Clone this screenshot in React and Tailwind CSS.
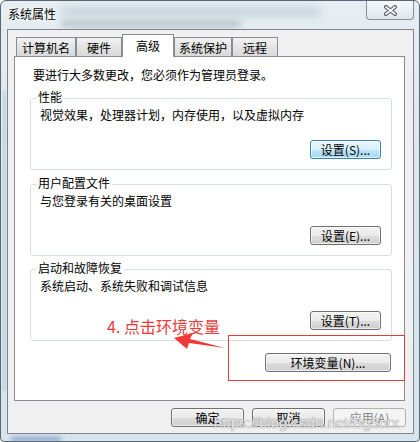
import clsx from "clsx";

const tabs = [
  { name: "计算机名", w: "w-[60px]" },
  { name: "硬件", w: "w-[46px]" },
  { name: "高级", w: "w-[52px]", active: true },
  { name: "系统保护", w: "w-[58px]" },
  { name: "远程", w: "w-[46px]" },
];

const groups = [
  { title: "性能", desc: "视觉效果，处理器计划，内存使用，以及虚拟内存", btn: "设置(S)...", focused: true, mt: "mt-[15px]" },
  { title: "用户配置文件", desc: "与您登录有关的桌面设置", btn: "设置(E)...", mt: "mt-[14px]" },
  { title: "启动和故障恢复", desc: "系统启动、系统失败和调试信息", btn: "设置(T)...", mt: "mt-[13px]" },
];

function WinButton({ children, focused, disabled, className }) {
  return (
    <button
      className={clsx(
        "h-[19px] rounded-[3px] border text-[12px] leading-none flex items-center justify-center",
        focused && "border-[#3c7fb1] bg-[linear-gradient(#eaf6fd_0%,#d9f0fc_50%,#bee6fd_50%,#a7d9f5_100%)] shadow-[inset_0_0_0_1px_rgba(255,255,255,0.7)] text-black",
        disabled && "border-[#adb2b5] bg-[#f4f4f4] text-[#838383]",
        !focused && !disabled && "border-[#707070] bg-[linear-gradient(#f2f2f2_0%,#ebebeb_50%,#dddddd_50%,#cfcfcf_100%)] shadow-[inset_0_0_0_1px_rgba(255,255,255,0.6)] text-black",
        className
      )}
    >
      {children}
    </button>
  );
}

function GroupBox({ g }) {
  return (
    <div className={clsx("relative ml-[15px] w-[362px] h-[72px] rounded-[3px] border border-[#d5dfe5] flex flex-col", g.mt)}>
      <span className="absolute -top-[10px] left-[5px] px-[2px] bg-white leading-[16px]">{g.title}</span>
      <p className="pt-[8px] pl-[9px] leading-[16px]">{g.desc}</p>
      <WinButton focused={g.focused} className="mt-auto self-end mr-[10px] mb-[10px] w-[71px]">
        {g.btn}
      </WinButton>
    </div>
  );
}

export default function App() {
  return (
    <div className="relative w-[420px] h-[442px] overflow-hidden rounded-t-[6px] rounded-b-[4px] border border-[#5a6670] bg-[linear-gradient(180deg,#e6eef3_0%,#dbe6ed_40%,#d7e4ec_100%)] text-[12px] text-black font-['Noto_Sans_CJK_SC',sans-serif]">
      {/* blurred background behind the glass */}
      <div className="absolute left-[60px] top-[6px] w-[260px] h-[10px] rounded-full bg-[#9fb0c0] opacity-40 blur-[4px]" />
      <div className="absolute left-[60px] top-[20px] w-[180px] h-[6px] rounded-full bg-[#6f7f8c] opacity-40 blur-[3px]" />
      <div className="absolute left-[2px] top-[90px] w-[3px] h-[300px] bg-[#9ec1dc] opacity-50 blur-[1px]" />
      <div className="absolute left-[10px] bottom-[0px] w-[50px] h-[4px] bg-[#5a79b8] opacity-60 blur-[2px]" />

      {/* title bar */}
      <div className="relative flex items-start justify-between h-[28px]">
        <span className="pl-[7px] pt-[5px] leading-[16px] text-[12px] [text-shadow:0_0_6px_#fff,0_0_3px_#fff]">系统属性</span>
        <div className="mr-[5px] w-[48px] h-[19px] rounded-b-[4px] border border-t-0 border-[#8b8f94] bg-[linear-gradient(#f6f9fb,#dfe7ec)] flex items-center justify-center">
          <svg width="15" height="11" viewBox="0 0 15 11">
            <path d="M3 2 L12 9 M12 2 L3 9" stroke="#50565c" strokeWidth="4" strokeLinecap="round" />
            <path d="M3 2 L12 9 M12 2 L3 9" stroke="#f4f6f8" strokeWidth="2" strokeLinecap="round" />
          </svg>
        </div>
      </div>

      {/* client area */}
      <div className="relative ml-[6px] w-[407px] h-[405px] border border-[#7f858c] bg-[#f0f0f0] pl-[6px] pt-[4px] flex flex-col">
        <div className="flex items-end h-[22px] pl-[2px]">
          {tabs.map((t) =>
            t.active ? (
              <div key={t.name} className={clsx("relative z-10 h-[23px] -mb-px border border-b-0 border-[#898c95] bg-white flex justify-center pt-[3px] leading-[16px]", t.w)}>
                {t.name}
              </div>
            ) : (
              <div key={t.name} className={clsx("h-[19px] border border-b-0 border-[#898c95] bg-[linear-gradient(#f3f3f3,#e4e4e4_50%,#d9d9d9)] flex justify-center pt-[2px] leading-[16px]", t.w)}>
                {t.name}
              </div>
            )
          )}
        </div>

        <div className="w-[391px] h-[345px] border border-[#898c95] bg-white flex flex-col">
          <p className="pt-[10px] pl-[18px] leading-[16px]">要进行大多数更改，您必须作为管理员登录。</p>
          {groups.map((g) => (
            <GroupBox key={g.title} g={g} />
          ))}
          <WinButton className="mt-[12px] ml-[250px] w-[126px]">环境变量(N)...</WinButton>
        </div>

        <div className="flex justify-end gap-[8px] mt-[7px] mr-[7px]">
          <WinButton className="w-[73px]">确定</WinButton>
          <WinButton className="w-[73px]">取消</WinButton>
          <WinButton disabled className="w-[73px]">应用(A)</WinButton>
        </div>
      </div>

      {/* annotation */}
      <span className="absolute left-[106px] top-[317px] text-[16px] leading-[16px] text-[#f03a3a]">4. 点击环境变量</span>
      <svg className="absolute left-[170px] top-[330px]" width="60" height="22" viewBox="170 330 60 22">
        <polygon points="173,337 192,332 189,338 224,347 188,342 186,348" fill="#f03a3a" />
      </svg>
      <div className="absolute left-[227px] top-[334px] w-[177px] h-[46px] border border-[#e53935]" />

      {/* watermark */}
      <span className="absolute left-[213px] top-[413px] text-[15px] leading-[18px] font-['Liberation_Sans',sans-serif] text-white/80 [text-shadow:0_0_1px_#8a8a8a,0_0_1px_#8a8a8a]">
        https://blog.csdn.net/Bg3crx
      </span>
    </div>
  );
}
